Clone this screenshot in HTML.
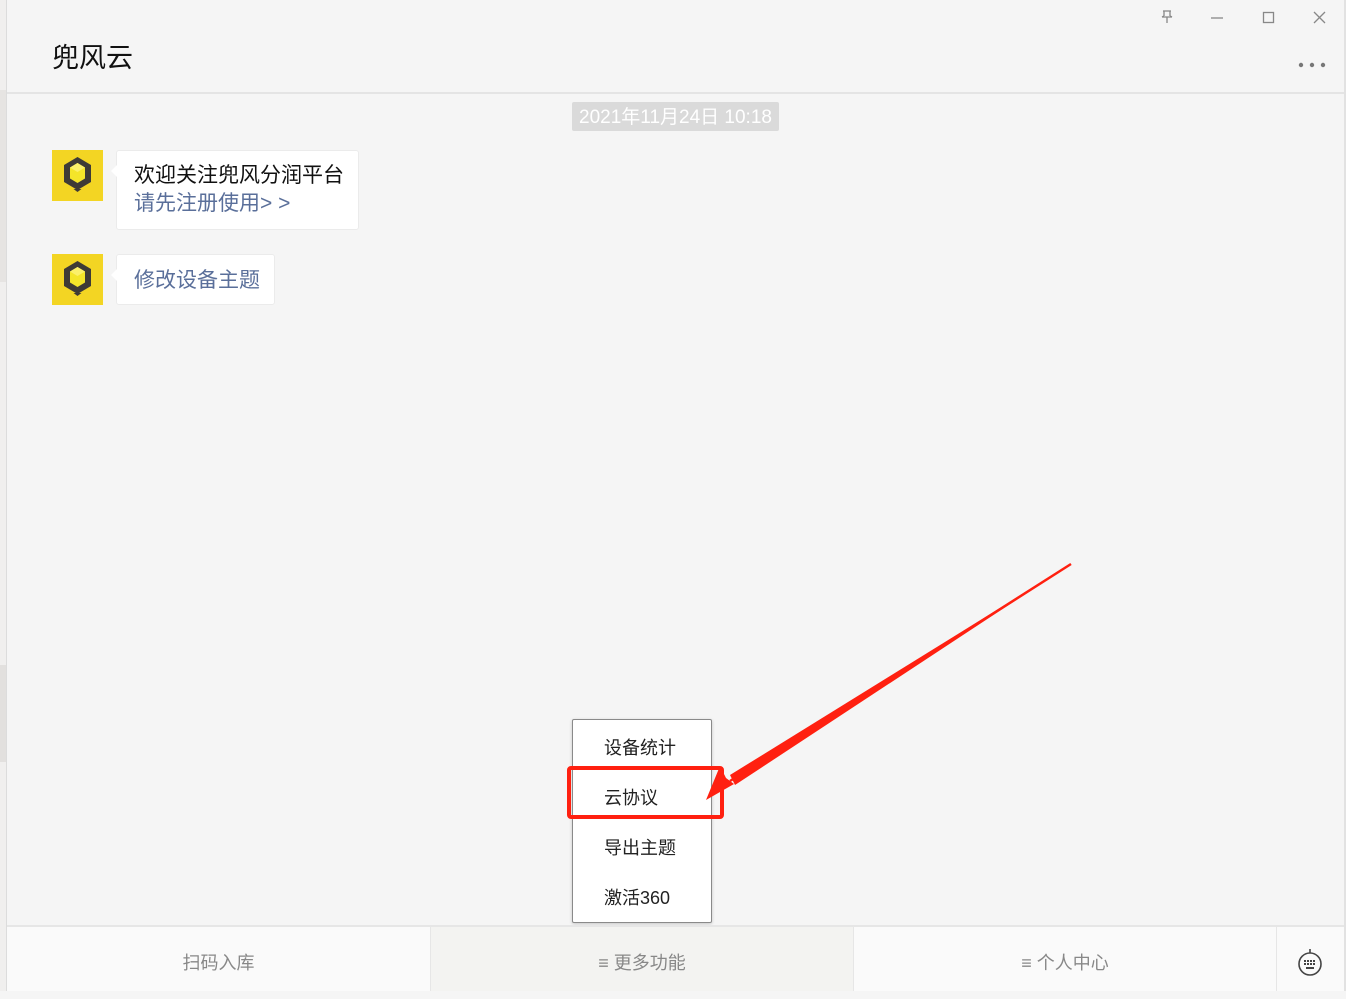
<!DOCTYPE html>
<html><head><meta charset="utf-8">
<style>
*{margin:0;padding:0;box-sizing:border-box}
body{width:1346px;height:991px;overflow:hidden;background:#f5f5f5;font-family:"Liberation Sans","Noto Sans CJK SC",sans-serif;position:relative}
.abs{position:absolute}
.leftstrip{left:0;top:0;width:6px;height:991px;background:#f0efee}
.leftline{left:6px;top:0;width:1px;height:991px;background:#dcdcdc}
.rightline{right:0;top:0;width:2px;height:991px;background:#e2e2e2}
.title{left:52px;top:36px;font-size:27px;color:#111}
.hline{left:7px;top:92px;width:1337px;height:2px;background:#e4e4e4}
.date{left:572px;top:102px;width:207px;height:29px;background:#dadada;color:#fff;font-size:19px;line-height:31px;text-align:center;border-radius:2px}
.av{width:51px;height:51px;background:#f3d523}
.bub{background:#fff;border:1px solid #ebebeb;border-radius:3px;font-size:21px}
.bub:before{content:"";position:absolute;left:-6px;top:14px;border:6px solid transparent;border-left:0;border-right-color:#fff}
.menu{left:572px;top:719px;width:140px;height:204px;background:#fff;border:1px solid #8a8a8a;border-radius:2px;box-shadow:0 1px 3px rgba(0,0,0,.2)}
.menu div{position:absolute;left:31px;font-size:18px;color:#222}
.bottom{left:7px;top:925px;width:1337px;height:66px;background:#fafafa;border-top:2px solid #e6e6e6}
.tab{position:absolute;top:0;height:64px;line-height:72px;text-align:center;font-size:18px;color:#888}
</style></head><body>
<div class="abs leftstrip"></div>
<div class="abs" style="left:0;top:90px;width:6px;height:192px;background:#e6e4e2"></div>
<div class="abs" style="left:0;top:665px;width:6px;height:97px;background:#e2e0de"></div>
<div class="abs leftline"></div>
<div class="abs rightline"></div>

<svg class="abs" style="left:1155px;top:8px" width="24" height="20" viewBox="0 0 24 20" fill="none" stroke="#888" stroke-width="1.3"><path d="M8 3h8M9 3v5M15 3v5M7 9h10M12 9v6M9 8l-2 1M15 8l2 1"/></svg>
<svg class="abs" style="left:1208px;top:8px" width="20" height="20" fill="none" stroke="#888" stroke-width="1.3"><path d="M3 10h12"/></svg>
<svg class="abs" style="left:1260px;top:8px" width="20" height="20" fill="none" stroke="#888" stroke-width="1.3"><rect x="3.5" y="4.5" width="10" height="10"/></svg>
<svg class="abs" style="left:1310px;top:8px" width="20" height="20" fill="none" stroke="#888" stroke-width="1.3"><path d="M4 4l11 11M15 4L4 15"/></svg>
<svg class="abs" style="left:1296px;top:60px" width="34" height="10" fill="#777"><circle cx="5" cy="5" r="2.2"/><circle cx="16" cy="5" r="2.2"/><circle cx="27" cy="5" r="2.2"/></svg>

<div class="abs title">兜风云</div>
<div class="abs hline"></div>
<div class="abs date">2021年11月24日 10:18</div>

<div class="abs av" style="left:52px;top:150px"><svg width="51" height="51" viewBox="0 0 51 51"><path d="M25.5 7L39 15v17L25.5 40 12 32V15z" fill="#3e3a36"/><path d="M25.5 42l-4-3h8z" fill="#3e3a36"/><path d="M25.5 13L33 17.5v11L25.5 33 18 28.5v-11z" fill="#f4e52a"/><path d="M18 17.5l7.5 4.5 7.5-4.5L25.5 13z" fill="#fbf06a"/></svg></div>
<div class="abs bub" style="left:116px;top:150px;width:243px;height:80px"><div style="position:absolute;left:17px;top:8px;color:#111">欢迎关注兜风分润平台</div><div style="position:absolute;left:17px;top:36px;color:#5a6f9a">请先注册使用&gt; &gt;</div></div>

<div class="abs av" style="left:52px;top:254px"><svg width="51" height="51" viewBox="0 0 51 51"><path d="M25.5 7L39 15v17L25.5 40 12 32V15z" fill="#3e3a36"/><path d="M25.5 42l-4-3h8z" fill="#3e3a36"/><path d="M25.5 13L33 17.5v11L25.5 33 18 28.5v-11z" fill="#f4e52a"/><path d="M18 17.5l7.5 4.5 7.5-4.5L25.5 13z" fill="#fbf06a"/></svg></div>
<div class="abs bub" style="left:116px;top:254px;width:159px;height:51px"><div style="position:absolute;left:17px;top:9px;color:#5a6f9a">修改设备主题</div></div>

<div class="abs menu">
<div style="top:14px">设备统计</div>
<div style="top:64px">云协议</div>
<div style="top:114px">导出主题</div>
<div style="top:164px">激活360</div>
</div>
<div class="abs" style="left:567px;top:766px;width:157px;height:53px;border:4px solid #ff2010;border-radius:4px"></div>
<svg class="abs" style="left:0;top:0" width="1346" height="991"><path d="M1071 564L730 781" stroke="#ff2010" stroke-width="2.5"/><path d="M706 800l14-34 6 12 8 6z" fill="#ff2010"/><path d="M730 775L1071 564 735 785z" fill="#ff2010"/></svg>

<div class="abs bottom">
<div class="tab" style="left:0;width:423px">扫码入库</div>
<div class="tab" style="left:423px;width:424px;background:#f3f3f1;border-left:1px solid #e6e6e6;border-right:1px solid #e6e6e6">≡ 更多功能</div>
<div class="tab" style="left:847px;width:422px">≡ 个人中心</div>
<div style="position:absolute;left:1269px;top:0;width:1px;height:64px;background:#e6e6e6"></div>
<svg style="position:absolute;left:1288px;top:18px" width="30" height="34" viewBox="0 0 30 34" fill="none" stroke="#444" stroke-width="1.6"><circle cx="15" cy="19" r="11"/><path d="M15 4v4"/><g fill="#444" stroke="none"><rect x="9" y="15" width="2" height="2"/><rect x="12" y="15" width="2" height="2"/><rect x="15" y="15" width="2" height="2"/><rect x="18" y="15" width="2" height="2"/><rect x="9" y="18" width="2" height="2"/><rect x="12" y="18" width="2" height="2"/><rect x="15" y="18" width="2" height="2"/><rect x="18" y="18" width="2" height="2"/><rect x="11" y="22" width="8" height="2"/></g></svg>
</div>
</body></html>
